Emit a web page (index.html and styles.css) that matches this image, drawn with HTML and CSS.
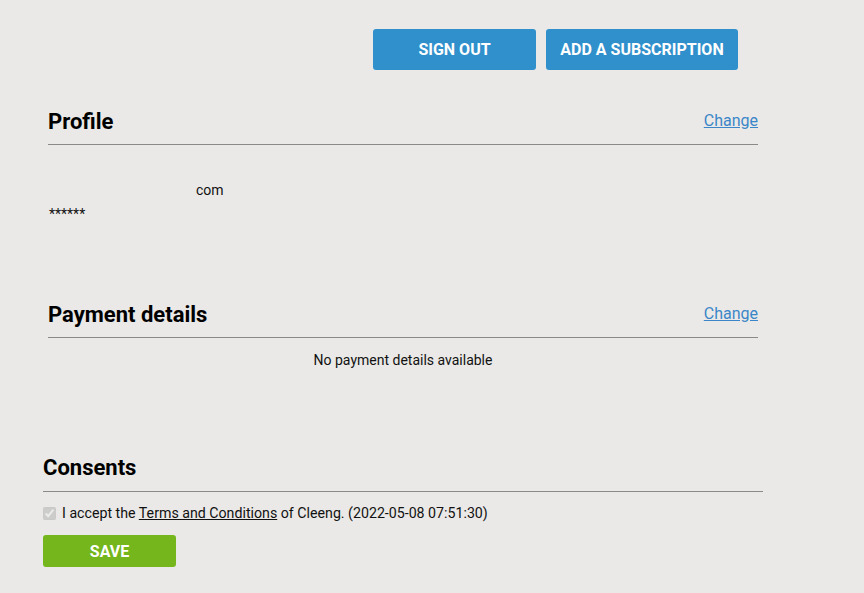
FILE: index.html
```html
<!DOCTYPE html>
<html>
<head>
<meta charset="utf-8">
<link rel="stylesheet" href="styles.css">
</head>
<body>
<div class="page">
  <div class="actions">
    <button class="btn btn-blue btn-signout">SIGN OUT</button>
    <button class="btn btn-blue btn-add">ADD A SUBSCRIPTION</button>
  </div>

  <section class="block profile">
    <div class="block-head">
      <h2>Profile</h2>
      <a href="#" class="change">Change</a>
    </div>
    <div class="profile-body">
      <div class="email">com</div>
      <div class="pwd">******</div>
    </div>
  </section>

  <section class="block payment">
    <div class="block-head">
      <h2>Payment details</h2>
      <a href="#" class="change">Change</a>
    </div>
    <div class="payment-body">No payment details available</div>
  </section>

  <section class="consents">
    <div class="consents-head">
      <h2>Consents</h2>
    </div>
    <label class="consent">
      <input type="checkbox" checked disabled>
      <span>I accept the <a href="#" class="terms">Terms and Conditions</a> of Cleeng. (2022-05-08 07:51:30)</span>
    </label>
    <button class="btn btn-green">SAVE</button>
  </section>
</div>
</body>
</html>
```

FILE: styles.css
```css
* { box-sizing: border-box; }
html, body {
  margin: 0;
  padding: 0;
  background: #eae9e7;
  font-family: Roboto, "Liberation Sans", sans-serif;
  color: #111;
}
.page {
  width: 864px;
  height: 593px;
  padding-top: 29px;
}
.actions {
  display: flex;
  gap: 10px;
  padding-left: 373px;
}
.btn {
  border: none;
  border-radius: 3px;
  color: #fff;
  font-family: Roboto, "Liberation Sans", sans-serif;
  font-weight: 700;
  font-size: 16px;
  cursor: pointer;
  padding: 0;
}
.btn-blue {
  background: #3090cc;
  height: 41px;
}
.btn-signout { width: 163px; }
.btn-add { width: 192px; }

.block {
  margin-left: 48px;
  width: 710px;
}
.block-head {
  display: flex;
  justify-content: space-between;
  align-items: flex-end;
  border-bottom: 1px solid #8a8a8a;
  height: 35px;
}
.profile .block-head { margin-top: 40px; }
h2 {
  margin: 0;
  font-size: 22px;
  font-weight: 700;
  color: #000;
  line-height: 26px;
  padding-bottom: 9px;
}
.change {
  color: #3a86c8;
  font-size: 16px;
  line-height: 20px;
  padding-bottom: 13px;
}
.profile-body {
  padding-top: 36px;
  font-size: 14px;
  height: 158px;
}
.email {
  padding-left: 148px;
  line-height: 18px;
}
.pwd {
  padding-left: 1px;
  line-height: 18px;
  font-size: 14px;
  margin-top: 6px;
  height: 18px;
}
.payment-body {
  text-align: center;
  font-size: 14px;
  line-height: 18px;
  padding-top: 13px;
  height: 119px;
}
.consents {
  margin-left: 43px;
  width: 720px;
}
.consents-head {
  border-bottom: 1px solid #8a8a8a;
  height: 35px;
  display: flex;
  align-items: flex-end;
}
.consents-head h2 { padding-bottom: 10px; }
.consent {
  display: flex;
  align-items: center;
  gap: 6px;
  font-size: 14.2px;
  margin-top: 13px;
  color: #111;
}
.consent input {
  margin: 0;
  width: 13px;
  height: 13px;
}
.terms { color: #111; }
.btn-green {
  margin-top: 14px;
  background: #74b61b;
  width: 133px;
  height: 32px;
}
```
